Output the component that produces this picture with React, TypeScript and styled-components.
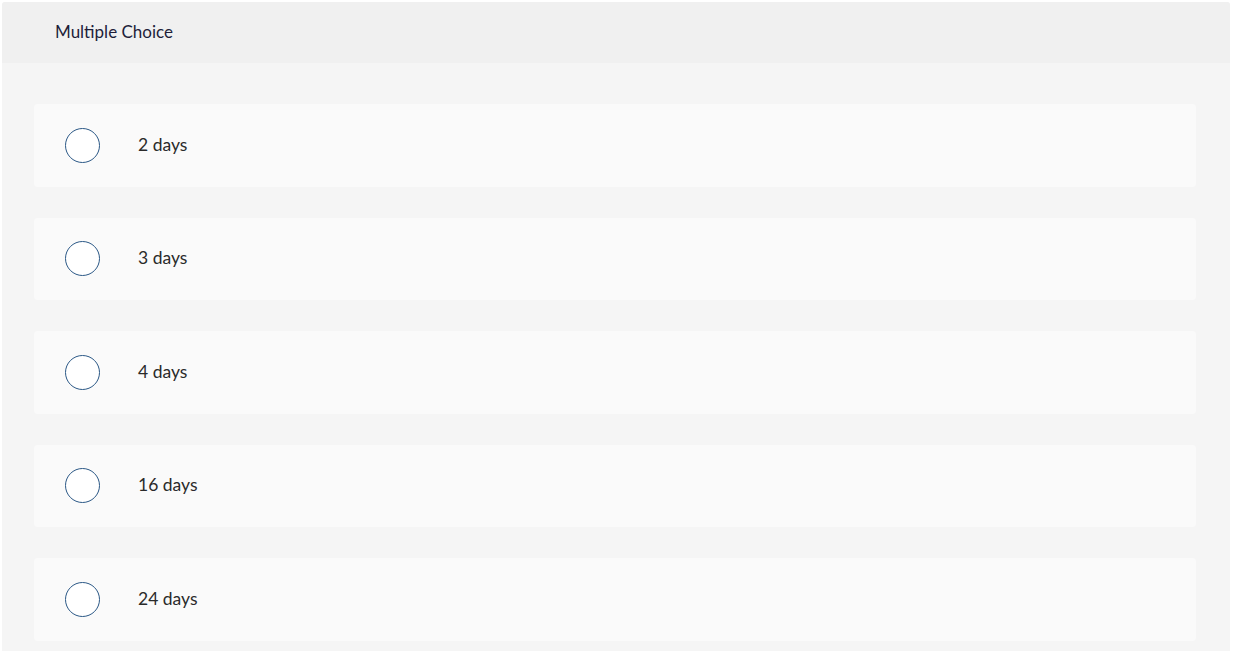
import React from 'react'
import styled, { createGlobalStyle } from 'styled-components'

const GlobalStyle = createGlobalStyle`
  body {
    margin: 0;
    background: #fff;
    font-family: Lato, "Open Sans", Arial, sans-serif;
  }
`

const Panel = styled.div`
  margin: 2px 7px 0 2px;
  border-radius: 3px 3px 0 0;
  overflow: hidden;
  background: #f5f5f5;
`

const Header = styled.div`
  height: 61px;
  background: #f0f0f0;
  display: flex;
  align-items: center;
  padding-left: 53px;
  padding-bottom: 2px;
  box-sizing: border-box;
  font-size: 17px;
  color: #1e1e3a;
`

const List = styled.div`
  display: flex;
  flex-direction: column;
  gap: 31px;
  padding: 41px 34px 12px 32px;
`

const Option = styled.label`
  display: flex;
  align-items: center;
  height: 82.5px;
  background: #fafafa;
  border-radius: 4px;
  padding-left: 31px;
  cursor: pointer;
`

const Radio = styled.span`
  width: 33px;
  height: 33px;
  box-sizing: content-box;
  border: 1.6px solid #2b5886;
  border-radius: 50%;
  background: #fff;
  flex-shrink: 0;
`

const OptionText = styled.span`
  margin-left: 38px;
  margin-bottom: 2px;
  font-size: 17.5px;
  color: #2a2a2a;
`

const options = ['2 days', '3 days', '4 days', '16 days', '24 days']

const App = () => {
  return (
    <>
      <GlobalStyle />
      <Panel>
        <Header>Multiple Choice</Header>
        <List>
          {options.map((o) => (
            <Option key={o}>
              <Radio />
              <OptionText>{o}</OptionText>
            </Option>
          ))}
        </List>
      </Panel>
    </>
  )
}

export default App
